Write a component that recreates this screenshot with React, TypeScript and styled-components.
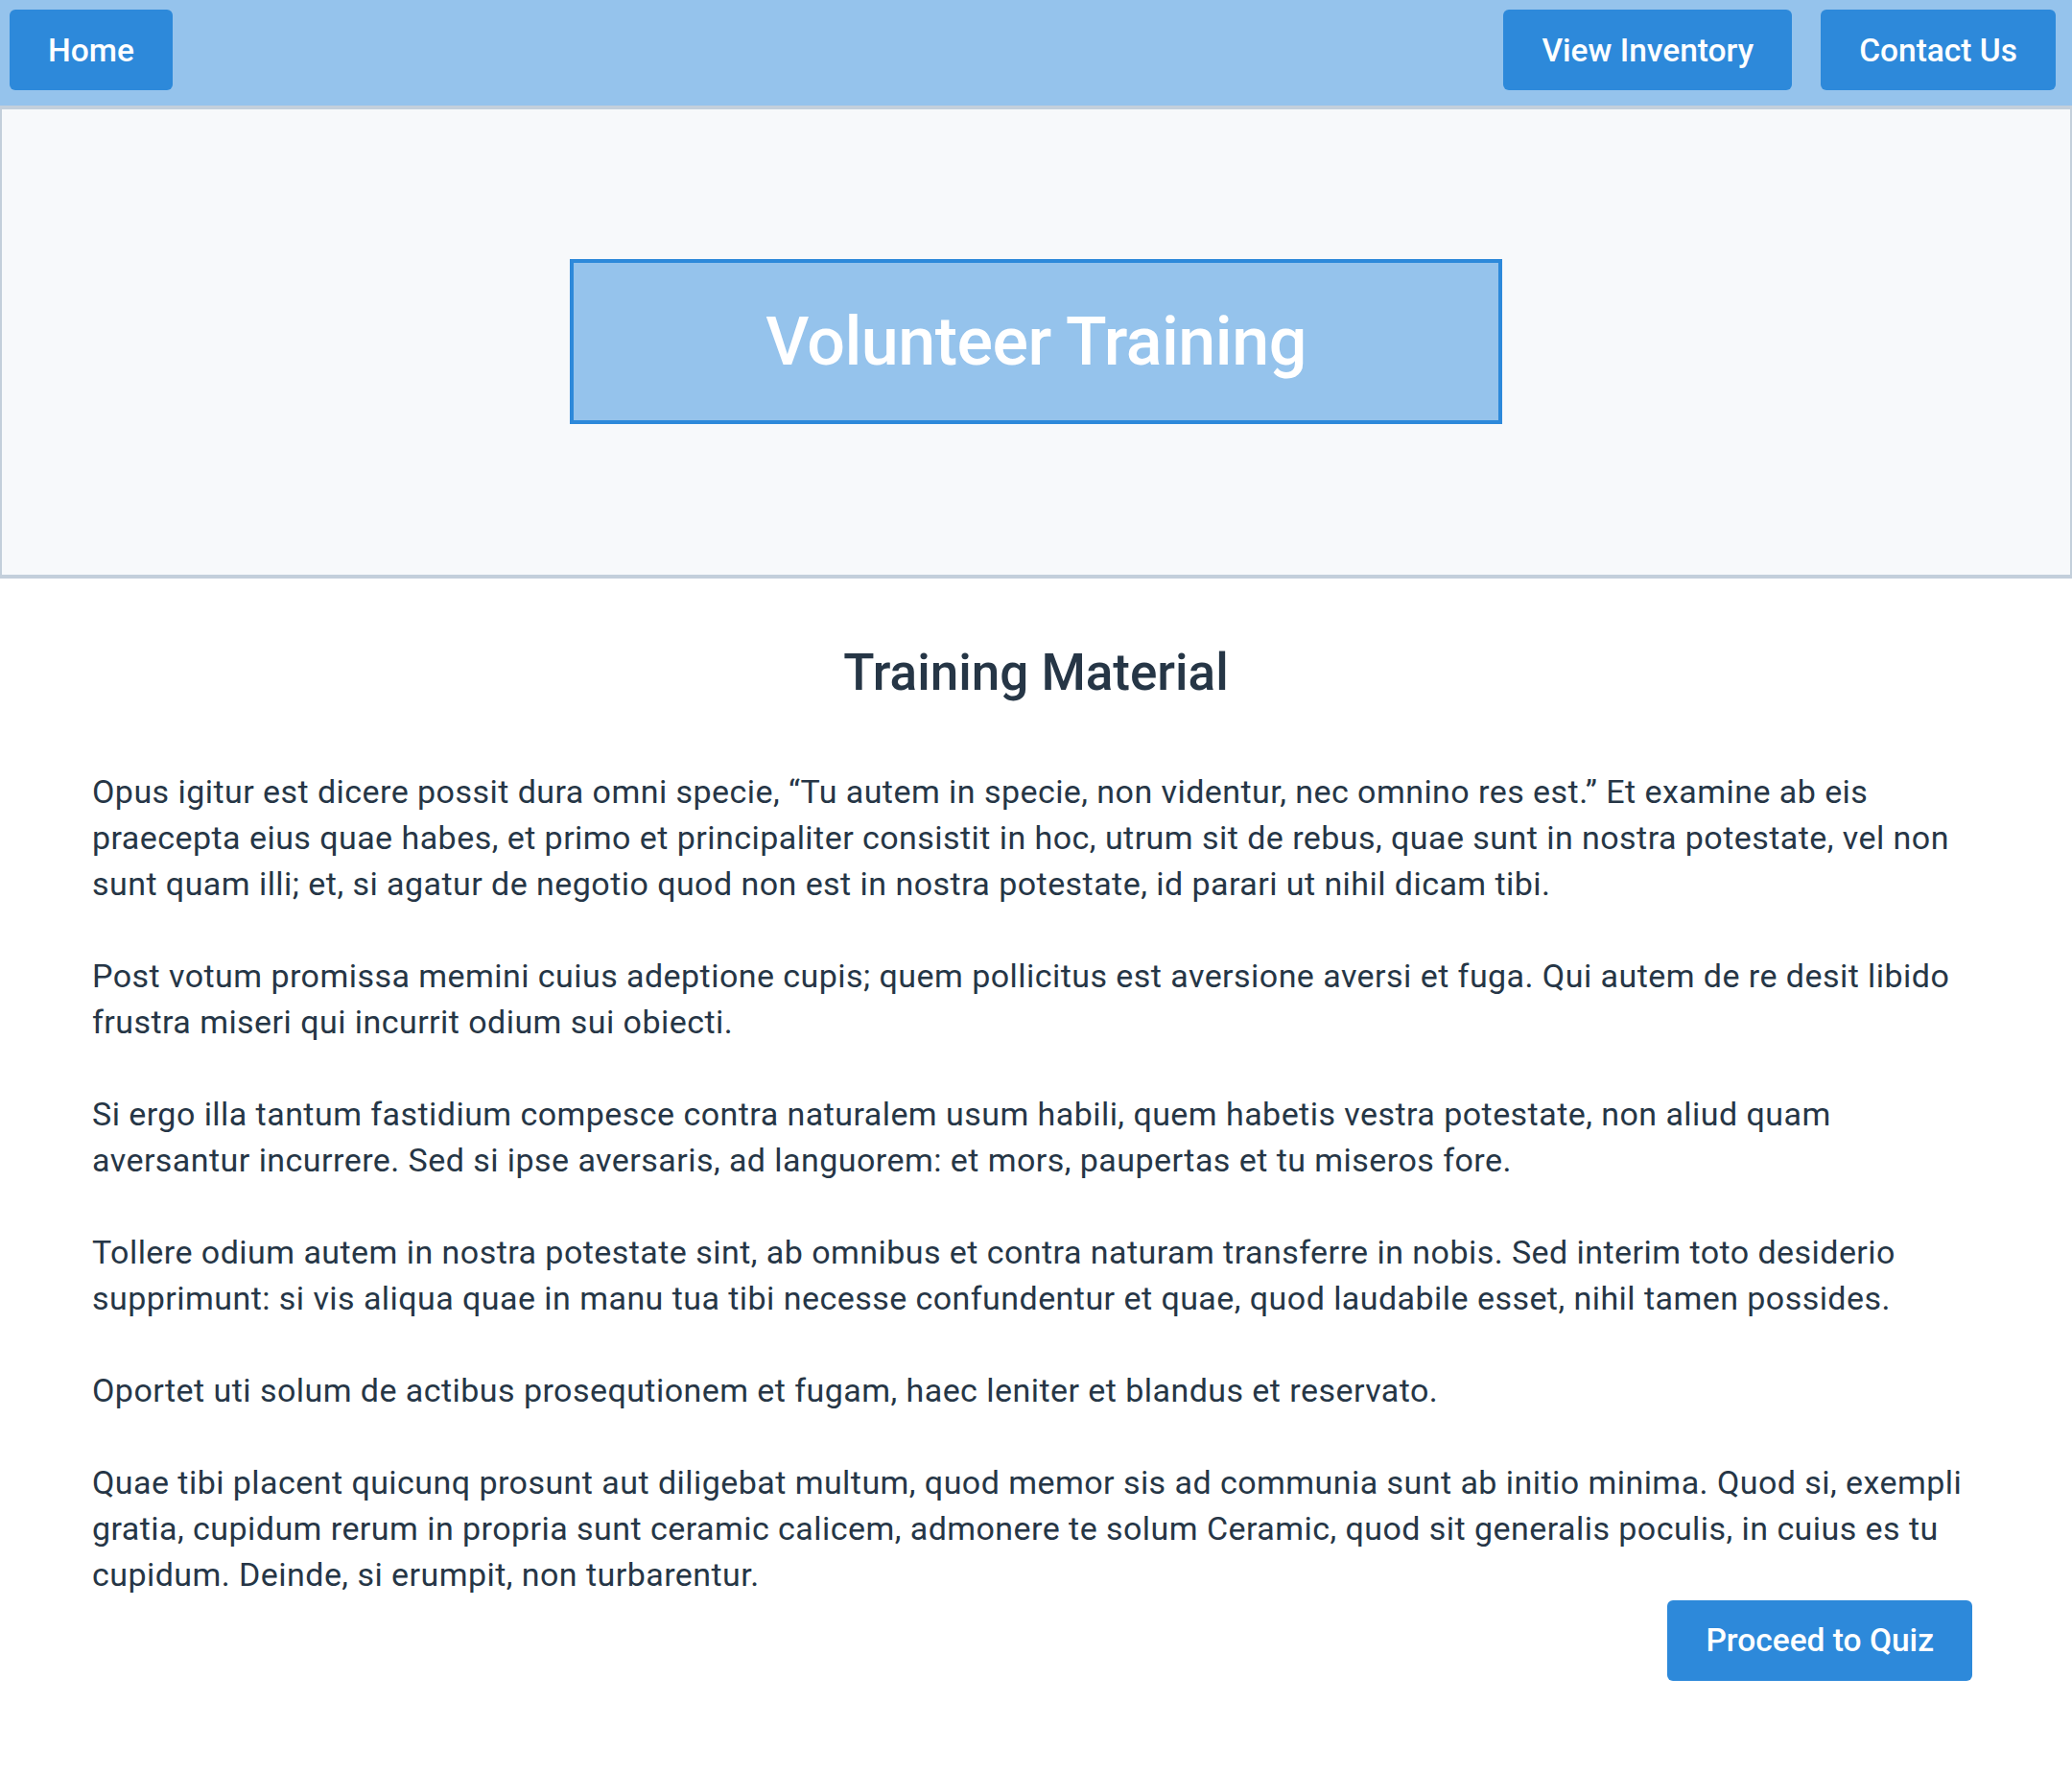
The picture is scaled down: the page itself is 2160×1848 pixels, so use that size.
import styled, { createGlobalStyle } from "styled-components";

const GlobalStyle = createGlobalStyle`
  * {
    box-sizing: border-box;
  }

  body {
    margin: 0;
    background: #ffffff;
    font-family: Roboto, "Liberation Sans", sans-serif;
    color: #263646;
  }
`;

const Nav = styled.nav`
  display: flex;
  align-items: flex-start;
  gap: 30px;
  height: 114px;
  padding: 10px 17px 0 10px;
  background: #95c3ec;
  border-bottom: 4px solid #c3cfdb;
`;

const NavSpacer = styled.div`
  flex: 1;
`;

const Button = styled.button`
  height: 84px;
  padding: 0 40px;
  border: none;
  border-radius: 6px;
  background: #2d89da;
  color: #ffffff;
  font-family: Roboto, "Liberation Sans", sans-serif;
  font-size: 33.5px;
  font-weight: 500;
  cursor: pointer;
`;

const Hero = styled.header`
  display: flex;
  justify-content: center;
  padding: 156px 0 157px;
  background: #f7f9fb;
  border: 2px solid #c3cfdb;
  border-top: none;
  border-bottom-width: 4px;
`;

const TitleBox = styled.div`
  display: flex;
  align-items: center;
  justify-content: center;
  width: 972px;
  height: 172px;
  background: #95c3ec;
  border: 4px solid #2d89da;
`;

const Title = styled.h1`
  margin: 0;
  color: #ffffff;
  font-size: 70px;
  font-weight: 500;
  letter-spacing: -0.5px;
`;

const Main = styled.main`
  display: flex;
  flex-direction: column;
  padding: 67px 96px 96px;
`;

const Heading = styled.h2`
  margin: 0 0 67px;
  text-align: center;
  font-size: 53px;
  font-weight: 500;
  line-height: 1.2;
  color: #263646;
`;

const Paragraphs = styled.div`
  display: flex;
  flex-direction: column;
  gap: 48px;
`;

const Paragraph = styled.p`
  margin: 0;
  font-size: 34px;
  line-height: 48px;
  letter-spacing: 0.45px;
  color: #263646;
`;

const Actions = styled.div`
  display: flex;
  justify-content: flex-end;
  margin-top: 3px;
  padding-right: 8px;
`;

const paragraphs = [
  "Opus igitur est dicere possit dura omni specie, \u201cTu autem in specie, non videntur, nec omnino res est.\u201d Et examine ab eis praecepta eius quae habes, et primo et principaliter consistit in hoc, utrum sit de rebus, quae sunt in nostra potestate, vel non sunt quam illi; et, si agatur de negotio quod non est in nostra potestate, id parari ut nihil dicam tibi.",
  "Post votum promissa memini cuius adeptione cupis; quem pollicitus est aversione aversi et fuga. Qui autem de re desit libido frustra miseri qui incurrit odium sui obiecti.",
  "Si ergo illa tantum fastidium compesce contra naturalem usum habili, quem habetis vestra potestate, non aliud quam aversantur incurrere. Sed si ipse aversaris, ad languorem: et mors, paupertas et tu miseros fore.",
  "Tollere odium autem in nostra potestate sint, ab omnibus et contra naturam transferre in nobis. Sed interim toto desiderio supprimunt: si vis aliqua quae in manu tua tibi necesse confundentur et quae, quod laudabile esset, nihil tamen possides.",
  "Oportet uti solum de actibus prosequtionem et fugam, haec leniter et blandus et reservato.",
  "Quae tibi placent quicunq prosunt aut diligebat multum, quod memor sis ad communia sunt ab initio minima. Quod si, exempli gratia, cupidum rerum in propria sunt ceramic calicem, admonere te solum Ceramic, quod sit generalis poculis, in cuius es tu cupidum. Deinde, si erumpit, non turbarentur.",
];

export default function App() {
  return (
    <>
      <GlobalStyle />
      <Nav>
        <Button>Home</Button>
        <NavSpacer />
        <Button>View Inventory</Button>
        <Button>Contact Us</Button>
      </Nav>
      <Hero>
        <TitleBox>
          <Title>Volunteer Training</Title>
        </TitleBox>
      </Hero>
      <Main>
        <Heading>Training Material</Heading>
        <Paragraphs>
          {paragraphs.map((text, i) => (
            <Paragraph key={i}>{text}</Paragraph>
          ))}
        </Paragraphs>
        <Actions>
          <Button>Proceed to Quiz</Button>
        </Actions>
      </Main>
    </>
  );
}
